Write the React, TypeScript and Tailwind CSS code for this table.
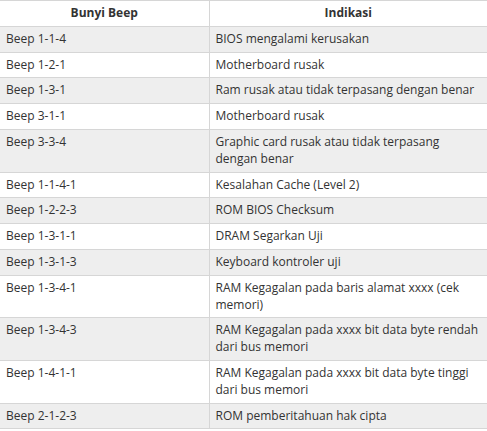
import React from "react";

const rows: [string, string][] = [
  ["Beep 1-1-4", "BIOS mengalami kerusakan"],
  ["Beep 1-2-1", "Motherboard rusak"],
  ["Beep 1-3-1", "Ram rusak atau tidak terpasang dengan benar"],
  ["Beep 3-1-1", "Motherboard rusak"],
  ["Beep 3-3-4", "Graphic card rusak atau tidak terpasang dengan benar"],
  ["Beep 1-1-4-1", "Kesalahan Cache (Level 2)"],
  ["Beep 1-2-2-3", "ROM BIOS Checksum"],
  ["Beep 1-3-1-1", "DRAM Segarkan Uji"],
  ["Beep 1-3-1-3", "Keyboard kontroler uji"],
  ["Beep 1-3-4-1", "RAM Kegagalan pada baris alamat xxxx (cek memori)"],
  ["Beep 1-3-4-3", "RAM Kegagalan pada xxxx bit data byte rendah dari bus memori"],
  ["Beep 1-4-1-1", "RAM Kegagalan pada xxxx bit data byte tinggi dari bus memori"],
  ["Beep 2-1-2-3", "ROM pemberitahuan hak cipta"],
];

export default function App() {
  return (
    <div className="w-[487px] bg-white font-['Open_Sans',sans-serif] text-[12px] leading-[16.8px] text-[#333]">
      <table className="w-full table-fixed border-collapse">
        <colgroup>
          <col className="w-[209px]" />
          <col />
        </colgroup>
        <thead>
          <tr className="bg-white">
            <th className="border-y border-[#d6d6d6] px-[6px] py-[4px] text-center font-bold">Bunyi Beep</th>
            <th className="border-y border-l border-[#d6d6d6] px-[6px] py-[4px] text-center font-bold">Indikasi</th>
          </tr>
        </thead>
        <tbody>
          {rows.map(([beep, info], i) => (
            <tr key={beep} className={i % 2 === 0 ? "bg-[#eeeeee]" : "bg-white"}>
              <td className="border-b border-[#d6d6d6] px-[6px] py-[4px] align-top">{beep}</td>
              <td className="border-b border-l border-[#d6d6d6] px-[6px] py-[4px] align-top">{info}</td>
            </tr>
          ))}
        </tbody>
      </table>
    </div>
  );
}
